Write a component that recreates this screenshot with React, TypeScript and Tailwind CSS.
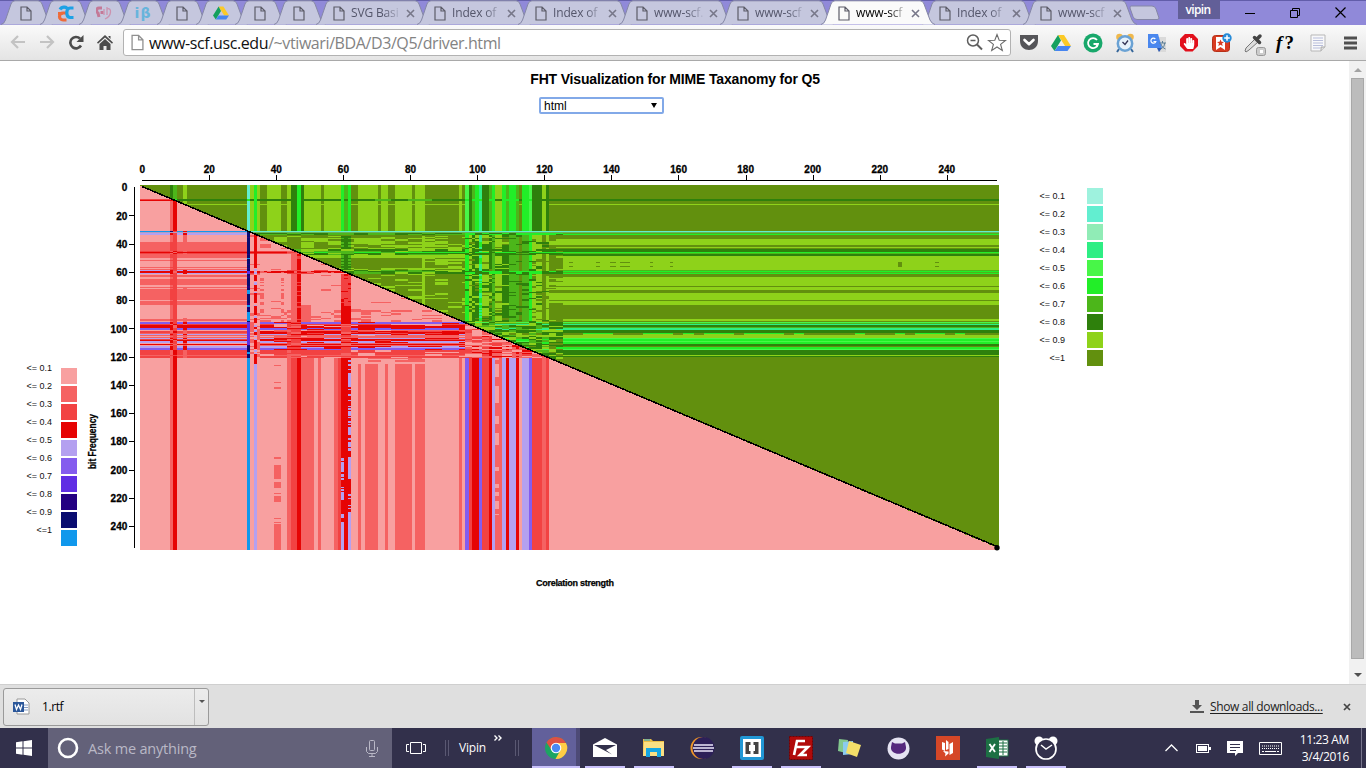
import React from 'react';
import { FaHandPaper } from 'react-icons/fa';

const UI = "font-['Open_Sans','Noto_Sans',sans-serif]";
const ARIAL = "'Liberation Sans', Arial, sans-serif";

/* ---------- heat map data ---------- */

const PINK = ['#f8a0a0', '#f56262', '#f24242', '#e60404', '#b4a0f0', '#845cee', '#602ee4', '#240082', '#0a0c70', '#1098ec', '#b49cc0'];
const GREEN = ['#9ef2de', '#62eed0', '#90ecb6', '#2eee84', '#48f648', '#22ee28', '#4cb61a', '#2e800c', '#8ed21a', '#62900e', '#68b45c'];

type Stops = [number, number][];

const bottomPink: Stops = [
  [139, 1], [170, 2], [173.4, 4], [177, 1], [247, 10], [250.5, 1], [254, 5], [257.3, 1], [287, 2], [291, 3], [297, 4],
  [300.8, 2], [314, 1], [317.4, 2], [321, 1], [334, 2], [338, 3], [341, 4], [351.4, 1], [357.3, 2], [361, 1], [364.6, 2],
  [378, 1], [385, 2], [388.3, 1], [394.7, 2], [411.7, 1], [415, 2], [425, 1], [458.4, 2], [461.8, 1], [465, 6], [468.5, 3],
  [471.7, 4], [478.5, 6], [482, 3], [488.5, 4], [492, 5], [495.3, 2], [502, 5], [505.5, 4], [508.7, 5], [515.4, 4],
  [518.7, 1], [522, 5], [528.7, 6], [532, 3], [542, 2], [545.5, 3], [549, 1],
];
const topGreen: Stops = [
  [139, 10], [170, 8], [173.4, 7], [177, 10], [183.4, 9], [187, 10], [247, 2], [250.5, 9], [254, 6], [257.3, 9], [260.7, 10],
  [267.3, 9], [280.8, 10], [287.4, 9], [290.8, 8], [297.4, 6], [301, 8], [304.3, 9], [321, 10], [324.4, 9], [341, 6],
  [344.4, 7], [347.8, 6], [351.3, 10], [357.4, 9], [377.8, 10], [381, 9], [387.8, 10], [394.4, 9], [411.7, 10], [415, 9],
  [425, 10], [458.4, 9], [461.8, 10], [465, 5], [468.4, 8], [471.7, 7], [475, 6], [478.4, 4], [481.8, 8], [488.7, 7],
  [492, 6], [495.4, 9], [502, 6], [505.4, 7], [508.7, 6], [515.4, 7], [518.8, 10], [522, 6], [528.8, 5], [532.3, 8],
  [542.3, 9], [545.4, 8], [549, 10],
];
const midGreen: Stops = [
  [465, 6], [468.4, 9], [471.7, 8], [478.4, 4], [481.8, 9], [488.7, 8], [492, 7], [495.4, 9], [502, 8], [508.7, 7],
  [518.8, 10], [522, 7], [528.8, 6], [532.3, 9], [542.3, 10], [545.4, 9], [549, 10],
];
const leftPink: Stops = [
  [185, 1], [199, 3], [200, 4], [201, 1], [231, 10], [232, 11], [233, 5], [235, 1], [242, 2], [247, 2], [251, 3], [252, 4],
  [253, 3], [254, 2], [258, 1], [260, 2], [261, 1], [267, 2], [268, 1], [269, 2], [270, 5], [271, 4], [273, 5], [274, 1],
  [275, 2], [277, 1], [279, 2], [285, 1], [287, 2], [288, 1], [289, 2], [300, 1], [301, 2], [305, 1], [319, 2], [321, 1],
  [322, 6], [324, 3], [325, 4], [328, 6], [330, 1], [331, 3], [333, 2], [334, 5], [335, 2], [336, 1], [337, 2], [338, 5],
  [339, 3], [340, 4], [341, 5], [343, 1], [344, 4], [345, 1], [346, 5], [348, 6], [350, 3], [355, 2], [356, 3], [358, 1],
];
const rightGreen: Stops = [
  [185, 10], [199, 8], [201, 10], [204, 9], [205, 10], [231, 2], [232, 11], [233, 7], [234, 6], [235, 10], [239, 9],
  [245, 10], [247, 9], [248, 10], [249, 8], [252, 6], [253, 7], [254, 8], [256, 9], [270, 7], [271, 6], [272, 7], [273, 6],
  [274, 10], [277, 9], [286, 10], [287, 9], [290, 10], [293, 9], [300, 10], [301, 9], [305, 10], [319, 9], [321, 10],
  [322, 5], [323, 7], [324, 4], [325, 8], [327, 7], [328, 4], [330, 8], [333, 10], [335, 9], [338, 5], [339, 6], [341, 5],
  [342, 6], [344, 8], [346, 10], [347, 6], [349, 5], [350, 8], [355, 9], [356, 8], [357, 10],
];

const at = (s: Stops, v: number) => {
  let r = s[0][1];
  for (const [p, c] of s) {
    if (v < p) break;
    r = c;
  }
  return r;
};
const noise = (a: number, b: number) => {
  const n = Math.sin(a * 127.1 + b * 311.7) * 43758.5453;
  return n - Math.floor(n);
};
const within = (v: number, ...r: [number, number][]) => r.some(([a, b]) => v >= a && v < b);

function pinkAt(x: number, y: number, c: number): number {
  const j = Math.floor((y - 185) / 1.42);
  if (y >= 358) {
    if (x > 351 && x < 425 && y < 364) return noise(Math.floor(c / 4), j) > 0.6 || y > 361 ? 1 : 2;
    if (within(x, [254, 257.3]) && y < 364) return 4;
    if (within(x, [274, 281]))
      return within(y, [365, 366], [382, 383], [387, 389], [457, 459], [465, 479], [482, 488], [493, 494], [496, 502], [518, 519], [522, 523], [524, 550]) ? 2 : 1;
    if (within(x, [341, 344.5])) return y > 456 && (y > 524 || noise(3, j) > 0.35) && !within(y, [480, 485], [500, 514]) ? 5 : 4;
    if (within(x, [348, 351.4])) return y > 511 || within(y, [373, 384], [427, 434], [442, 445], [457, 479]) || noise(9, j) > 0.72 ? 5 : 4;
    if (within(x, [495.3, 498.8])) return y < 515 && noise(7, Math.floor(j / 3)) > 0.5 ? 1 : 2;
    return at(bottomPink, x);
  }
  const row = at(leftPink, y);
  if (x < 247) {
    if (row === 11) return 11;
    if (within(x, [170, 173.4])) return row >= 5 ? (row === 10 ? 9 : 4) : row > 3 ? row : y > 198 ? (row === 2 ? 3 : 2) : 1;
    if (within(x, [173.4, 177])) return row >= 5 ? 3 : row === 3 ? 4 : row === 4 ? 2 : y < 231 ? 4 : 3;
    if (within(x, [183.5, 187])) return row >= 4 ? 4 : within(y, [235, 258], [288, 290], [318, 358]) ? 2 : row;
    return row;
  }
  if (x < 250.5) return within(y, [271, 274], [322, 345]) ? 7 : within(y, [258, 259], [290, 294], [305, 307], [312, 321], [352, 354]) ? 10 : noise(2, j) > 0.85 ? 8 : 9;
  if (within(x, [254, 257.3])) return noise(c, j) > 0.84 ? 5 : noise(c, j + 1) > 0.8 ? 1 : 4;
  if (y >= 322) {
    const n = noise(Math.floor(c / 5), j);
    if (x > 465) {
      const m = noise(Math.floor(c / 3), j);
      if (at(bottomPink, x) === 4 && m > 0.5) return y > 345 ? 4 : 3;
      return m > 0.9 ? 4 : m > 0.68 ? 3 : m > 0.28 ? 2 : 1;
    }
    if (within(x, [287, 301], [341, 351])) return n > 0.5 ? 3 : row > 4 ? 4 : 2;
    if (x < 260) return n > 0.5 ? 2 : 1;
    if (row === 6) return n > 0.2 ? 6 : 4;
    if (row === 5) return n > 0.4 ? 5 : 4;
    if (within(y, [331, 334], [338, 341])) return n > 0.3 ? 4 : 3;
    return n > 0.88 ? 1 : row === 1 ? 2 : row;
  }
  if (within(y, [251, 254])) return y === 252 ? (x < 288 ? 4 : 3) : x < 288 ? 3 : 2;
  if (within(y, [270, 274])) return within(y, [271, 273]) ? (noise(c, j) > 0.2 ? 4 : 2) : noise(Math.floor(c / 4), j) > 0.5 ? 3 : 1;
  if (within(x, [291, 297])) return 2;
  if (within(x, [297, 301])) return noise(c, j) > 0.7 ? 3 : 4;
  if (within(x, [341, 351.4])) return y > 305 || noise(c, j) > 0.75 ? 4 : 3;
  if (within(x, [301, 311]) && y > 304) return 2;
  if (within(x, [287, 291], [334, 341]) && y > 308) return noise(1, j) > 0.4 ? 2 : 1;
  if (within(x, [260.5, 264], [281, 284.5]) && y > 274) return noise(5, j) > 0.5 ? 2 : 1;
  if (y < 251 || y > 309) return noise(Math.floor(c / 3), j) > 0.68 ? 2 : 1;
  return noise(Math.floor(c / 3), j) > 0.93 ? 2 : 1;
}

function greenAt(x: number, y: number, c: number): number {
  const j = Math.floor((y - 185) / 1.42);
  if (y < 231) {
    const col = at(topGreen, x);
    if (within(y, [199, 201])) return x > 430 || x < 300 ? (col < 8 ? 6 : 8) : col === 6 ? 6 : noise(Math.floor(c / 5), 1) > 0.2 ? 8 : 7;
    if (y === 204) return col < 9 ? col : 9;
    return col;
  }
  if (y === 231) return 2;
  if (y === 232) return 11;
  const row = at(rightGreen, y);
  if (x >= 562) {
    if (within(y, [262, 263], [266, 267]) && within(x, [569, 573], [597, 601], [609, 616], [620, 629], [650, 654], [671, 674], [897, 901], [934, 938])) return 10;
    if (within(y, [263, 266]) && within(x, [571, 573], [897, 901])) return 10;
    if (y === 333 && noise(Math.floor(c / 3), 3) > 0.5) return 6;
    if (y === 334 && noise(Math.floor(c / 3), 3) > 0.5) return 9;
    return row;
  }
  if (x < 465) {
    const n = noise(Math.floor(c / 4), j);
    if (within(x, [254, 257.3])) return n > 0.4 ? 6 : 8;
    if (y < 236) return y < 235 ? (n > 0.4 ? 7 : 8) : 10;
    if (y === 252) return n > 0.35 ? 6 : 7;
    if (within(y, [249, 255])) return n > 0.45 ? 8 : n > 0.25 ? 7 : 9;
    if (within(y, [270, 274])) return n > 0.75 ? 7 : n > 0.2 ? 8 : 9;
    if (within(x, [341, 351.4])) return within(x, [344, 348]) ? 8 : n > 0.5 ? 7 : 8;
    if (within(x, [421, 425])) return 9;
    if (y < 249) return n > 0.55 ? 9 : 10;
    if (y < 258) return 9;
    if (within(x, [301, 311])) return 9;
    if (y < 268) return x > 425 && n > 0.65 ? 9 : 10;
    if (y < 270) return n > 0.4 ? 9 : 10;
    return n > 0.8 ? 9 : 10;
  }
  const n = noise(Math.floor(c / 2), j);
  if (y >= 321) return n > 0.75 ? row : n > 0.5 ? 8 : n > 0.25 ? 9 : x > 549 ? 10 : 7;
  if (within(y, [233, 235], [252, 253], [271, 274])) return n > 0.4 ? 6 : 8;
  if (within(y, [249, 255])) return n > 0.4 ? 8 : at(midGreen, x);
  if (x >= 549) return row === 9 && !within(y, [258, 268]) ? (n > 0.3 ? 9 : 10) : 10;
  const col = at(midGreen, x);
  if (col === 4) return n > 0.5 ? 4 : 6;
  if (n > 0.84) return col === 8 ? 9 : 8;
  if (n < 0.1 && col > 7) return 10;
  return col;
}

const edge = (c: number) => Math.round(139.6 + c * 3.357);

function buildPaths() {
  const out: Record<string, string> = {};
  const add = (k: string, x: number, y: number, w: number) => {
    out[k] = (out[k] || '') + `M${x} ${y}h${w}v1h${-w}z`;
  };
  for (let y = 185; y < 550; y++) {
    const diag = (142 + (y - 186.5) * 2.3684 - 139.6) / 3.357;
    let start = 0;
    let prev = '';
    for (let c = 0; c <= 256; c++) {
      let k = '';
      if (c < 256) {
        const x = 139.6 + (c + 0.5) * 3.357;
        k = c < diag ? PINK[pinkAt(x, y, c) - 1] : GREEN[greenAt(x, y, c) - 1];
      }
      if (k !== prev) {
        if (prev) add(prev, edge(start), y, edge(c) - edge(start));
        start = c;
        prev = k;
      }
    }
  }
  return out;
}
const paths = buildPaths();
const ticks = Array.from({ length: 13 }, (_, i) => i * 20);

function Legend({ x, y, colors, textX, textY }: { x: number; y: number; colors: string[]; textX: number; textY: number }) {
  return (
    <g>
      {colors.slice(0, 10).map((c, i) => (
        <g key={c}>
          <rect x={x} y={y + i * 18} width={16} height={16} fill={c} />
          <text x={textX} y={textY + i * 18} textAnchor="end" fontSize={9} fill="#111">
            {i === 9 ? '<=1' : `<= 0.${i + 1}`}
          </text>
        </g>
      ))}
    </g>
  );
}

function Chart() {
  return (
    <svg className="block shrink-0" width="1349" height="564" viewBox="0 120 1349 564" fontFamily={ARIAL}>
      <g shapeRendering="crispEdges">
        {Object.entries(paths).map(([k, d]) => (
          <path key={k} d={d} fill={k} />
        ))}
      </g>
      <path d="M142 186.5L997 546.5" stroke="#000" strokeWidth="1.5" shapeRendering="crispEdges" />
      <circle cx="997" cy="547.8" r="2.7" />
      <path d="M142 180.5H997M134.5 187V548" stroke="#000" shapeRendering="crispEdges" />
      {ticks.map((t) => (
        <g key={t} fontSize={10} fontWeight="bold" stroke="#000" strokeWidth={0.3}>
          {t > 0 && (
            <path d={`M${Math.round(142 + t * 3.353) + 0.5} 175v5M129 ${Math.round(187.2 + t * 1.412) + 0.5}h5`} strokeWidth={1} shapeRendering="crispEdges" />
          )}
          <text x={142.3 + t * 3.352} y={173} textAnchor="middle">{t}</text>
          <text x={127.3} y={191.3 + t * 1.412} textAnchor="end">{t}</text>
        </g>
      ))}
      <g fontSize={9} fontWeight="bold" stroke="#000" strokeWidth={0.25}>
        <text x={536} y={586} textLength={78}>Corelation strength</text>
        <text transform="translate(96 469) rotate(-90)" fontSize={10} textLength={55} lengthAdjust="spacingAndGlyphs">bit Frequency</text>
      </g>
      <Legend x={61} y={368} colors={PINK} textX={52} textY={371} />
      <Legend x={1087} y={188} colors={GREEN} textX={1065} textY={199} />
    </svg>
  );
}

/* ---------- browser chrome ---------- */

const FileIcon = ({ big = false }: { big?: boolean }) => (
  <svg className="shrink-0" width={big ? 13 : 12} height={big ? 17 : 15} viewBox="0 0 12 15" fill="none" stroke={big ? '#909090' : '#5c5c68'} strokeWidth="1.2">
    <path d="M1 1h6l4 4v9H1zM7 1v4h4" fill={big ? '#fff' : 'none'} />
  </svg>
);
const Drive = ({ s }: { s: number }) => (
  <svg width={s} height={s} viewBox="0 0 20 20">
    <path d="M7 2h6l7 11h-6z" fill="#fbc926" />
    <path d="M7 2l3 5.500L3.500 18 0 13z" fill="#14a05e" />
    <path d="M7 13h13l-3.500 5h-13z" fill="#4685f0" />
  </svg>
);

const Close = () => (
  <svg className="block" width="9" height="9" viewBox="0 0 9 9" stroke="#777789" strokeWidth="1.6"><path d="M1 1l7 7M8 1L1 8" /></svg>
);

function Tab({ title, icon, active }: { title?: string; icon?: React.ReactNode; active?: boolean }) {
  const w = title ? 114 : 52;
  const d = `M0 24.500Q3 24 4.500 20L10 4Q11 .8 14 .8H${w - 15}Q${w - 12} .8 ${w - 11} 4L${w - 5} 20Q${w - 3} 24 ${w} 24.500`;
  return (
    <div className={`relative h-[25px] shrink-0 -mr-[13px] ${title ? 'w-[114px]' : 'w-[52px]'} ${active ? 'z-10' : ''}`}>
      <svg className="absolute inset-0" width={w} height="25" fill={active ? '#fafafa' : '#c5c7de'} stroke="#8587a6"><path d={d} /></svg>
      <div className={`relative flex h-full items-center ${title ? 'pl-[17px] pr-[15px] pt-px' : 'justify-center pr-[2px] pt-px'}`}>
        {icon || <FileIcon />}
        {title && (
          <>
            <span className={`${UI} ml-[6px] w-[53px] shrink-0 whitespace-nowrap text-[12px] leading-4 tracking-[-0.15px] ${active ? 'text-black' : 'text-[#54566b]'} [mask-image:linear-gradient(to_right,black_62%,transparent_96%)]`}>
              {title}
            </span>
            <span className="ml-auto"><Close /></span>
          </>
        )}
      </div>
    </div>
  );
}

const extIcons: React.ReactNode[] = [
  <svg width="20" height="17" viewBox="0 0 20 17"><path d="M1 1h18v6c0 12-18 12-18 0z" fill="#555559" /><path d="M5.500 6L10 10.200 14.500 6" stroke="#fff" strokeWidth="2.600" fill="none" strokeLinecap="round" strokeLinejoin="round" /></svg>,
  <Drive s={20} />,
  <svg width="20" height="20" viewBox="0 0 20 20"><circle cx="10" cy="10" r="9.500" fill="#18a86b" /><path d="M14 7A5 5 0 1 0 15 11h-4.500M15 11l-2 3" stroke="#fff" strokeWidth="1.800" fill="none" /></svg>,
  <svg width="20" height="20" viewBox="0 0 20 20"><circle cx="4.500" cy="4" r="3.300" fill="#efb84c" /><circle cx="15.500" cy="4" r="3.300" fill="#efb84c" /><path d="M4 16l-2 3M16 16l2 3" stroke="#37679a" strokeWidth="2" /><circle cx="10" cy="10.500" r="7.200" fill="#e7f1fa" stroke="#6aa2d4" strokeWidth="2.500" /><path d="M7.500 9l2.500 2.500 3-4" stroke="#335" fill="none" strokeWidth="1.300" /></svg>,
  <svg width="20" height="20" viewBox="0 0 20 20"><path d="M8 4h11v15h-8z" fill="#dadada" /><path d="M1 1h10l4 14H1z" fill="#4a87ee" /><path d="M10 15h5l-3 4z" fill="#2b59b5" /><path d="M8.300 6A2.500 2.500 0 1 0 8.800 8.500H6.500" stroke="#fff" fill="none" strokeWidth="1.200" /><path d="M12 10h7M15.500 8v2M13.500 16c3-1 4-3 4-6M14 11c.5 2 2 4 4.500 5" stroke="#5b7e96" fill="none" /></svg>,
  <span className="flex h-[18px] w-[18px] items-center justify-center bg-[#e2101c] [clip-path:polygon(30%_0,70%_0,100%_30%,100%_70%,70%_100%,30%_100%,0_70%,0_30%)]"><FaHandPaper color="#fff" size={12} /></span>,
  <svg width="21" height="20" viewBox="0 0 21 20"><rect x="1.500" y="2.500" width="17" height="16" rx="3" fill="#d93c22" stroke="#b63018" /><path d="M5 4h9v13l-4.500-3L5 17z" fill="#fff" /><path d="M9.500 6.500l1 2.300 2.500.2-2 1.600.7 2.400-2.200-1.300L7.300 13 8 10.600 6 9l2.500-.2z" fill="#d93c22" /><circle cx="16" cy="5" r="4.700" fill="#268bd8" /><path d="M16 2.200v5.600M13.200 5h5.600" stroke="#fff" strokeWidth="1.500" /></svg>,
  <svg className="ml-[4px] mt-[4px]" width="24" height="24" viewBox="0 0 24 24"><path d="M2 18l1-3 9-9 3 3-9 8-3 2z" fill="#ddd" stroke="#777" /><path d="M11.500 4.500l5 5M14 6l3-3" stroke="#444" strokeWidth="3.500" strokeLinecap="round" /><rect x="13.500" y="14.500" width="9" height="8" rx="2" fill="#ccc" stroke="#999" /><rect x="17" y="17" width="3" height="3" fill="#fff" /></svg>,
  <span className="font-['Liberation_Serif',serif] text-[19px] font-bold italic leading-5 text-black">f<span className="ml-[2px] not-italic">?</span></span>,
  <svg className="ml-[2px]" width="16" height="18" viewBox="0 0 16 18"><path d="M1 1h14v12l-4 4H1z" fill="#f8f8fa" stroke="#b7b7b7" /><path d="M3 4h10M3 6.500h10M3 9h10M3 11.500h10M3 14h7" stroke="#b8bedb" /><path d="M15 13h-4v4" fill="#ddd" stroke="#aaa" /></svg>,
  <svg className="ml-[3px]" width="14" height="14"><path d="M0 2h13M0 7h13M0 12h13" stroke="#505050" strokeWidth="3" /></svg>,
];

/* ---------- taskbar ---------- */

const apps: { icon: React.ReactNode; open?: boolean }[] = [
  { icon: <svg width="24" height="24" viewBox="0 0 24 24"><circle cx="12" cy="12" r="11" fill="#1da462" /><path d="M12 7h10a11 11 0 0 1-10.500 16L16.500 14z" fill="#ffcd46" /><path d="M12 1A11 11 0 0 1 22 7H12L7.500 14 2.500 6.500A11 11 0 0 1 12 1z" fill="#dd5144" /><circle cx="12" cy="12" r="5.300" fill="#fff" /><circle cx="12" cy="12" r="4.200" fill="#4a8af4" /></svg> },
  { icon: <svg width="24" height="20" viewBox="0 0 24 20"><path d="M0 6.500L12 0l12 6.500V19H0z" fill="#fff" /><path d="M1 7h22l-10 5 6 4.500z" fill="#32304b" /></svg>, open: true },
  { icon: <svg width="23" height="20" viewBox="0 0 23 20"><path d="M1 1h8l2 2h11v15H1z" fill="#edbd45" /><path d="M2 4h20v14H1z" fill="#fbdf83" /><path d="M4 10h15v9h-4v-5H8v5H4z" fill="#16a6e3" /><path d="M2 2h6" stroke="#16a6e3" /></svg>, open: true },
  { icon: <svg width="25" height="24" viewBox="0 0 25 24"><circle cx="11.500" cy="12" r="11" fill="#ef9528" /><circle cx="13.500" cy="12" r="11" fill="#2d2058" /><path d="M4 9h19M3 12h21M4 15h19" stroke="#ebe6fa" strokeWidth="1.700" /></svg> },
  { icon: <svg width="24" height="24" viewBox="0 0 24 24"><rect width="24" height="24" rx="2" fill="#2197d5" /><rect x="3" y="3" width="18" height="18" fill="#fff" /><path d="M10.500 6H5.500v12h5v-3H9V9h1.500zM13.500 6h5v12h-5v-3H15V9h-1.500z" fill="#444" /></svg>, open: true },
  { icon: <svg width="24" height="24" viewBox="0 0 24 24"><rect x=".5" y=".5" width="23" height="23" fill="#b10a0a" stroke="#700" strokeDasharray="2 1" /><path d="M5 19L8 5h8M7 11h6M12 11h7l-8 8h7" stroke="#fff" strokeWidth="2.600" fill="none" /></svg>, open: true },
  { icon: <svg width="25" height="22" viewBox="0 0 25 22"><path d="M2 2l9 1-2 13-8-2z" fill="#83c88e" /><path d="M6 5l10-1v13l-10 1z" fill="#8bcbef" /><path d="M12 4l12 4-4 12-11-4z" fill="#f4df69" /></svg> },
  { icon: <svg width="23" height="23" viewBox="0 0 23 23"><circle cx="11.500" cy="11.500" r="11" fill="#e5e3f2" /><path d="M5 5l3 1.500h7L18 5l1 5c1 9-16 9-15 0z" fill="#55287d" /></svg> },
  { icon: <svg width="24" height="24" viewBox="0 0 24 24"><rect width="24" height="24" fill="#d54727" /><path d="M6 6l3 1v8l-3-1.500zM13.500 8l3.500-2v11l-3.500 2zM10 4l2.500 2v7L10 14z" fill="#fff" /><path d="M7 15l5.500.500v2L9 20.500l.500-3z" fill="#fff" /></svg> },
  { icon: <svg width="24" height="24" viewBox="0 0 24 24"><rect x="13" y="4" width="10" height="16" fill="#fff" stroke="#1d7044" /><path d="M14 7h8M14 10h8M14 13h8M14 16h8M18 5v14" stroke="#1d7044" /><path d="M1 3l13-2v22L1 21z" fill="#1d7044" /><path d="M4.500 8l5.500 8M10 8l-5.500 8" stroke="#fff" strokeWidth="1.900" /></svg>, open: true },
  { icon: <svg width="24" height="24" viewBox="0 0 24 24"><circle cx="5" cy="5" r="4.500" fill="#fff" /><circle cx="19" cy="5" r="4.500" fill="#fff" /><circle cx="12" cy="13" r="10" fill="#32304b" stroke="#fff" strokeWidth="1.700" /><path d="M7 9l5 4 6-4" stroke="#fff" fill="none" strokeWidth="1.500" /></svg>, open: true },
];

export default function App() {
  return (
    <div className="flex h-[768px] w-[1366px] flex-col overflow-hidden bg-white">
      <header className="flex h-[25px] shrink-0 border-t border-[#625daa] bg-[#9089d9]">
        <div className="-mt-px flex pl-[1px]">
          <Tab />
          <Tab icon={<svg width="17" height="17" viewBox="0 0 17 17" fill="none" strokeWidth="3.200"><path d="M9.500 8H6A3.500 3.500 0 0 0 6 15h3.500M1 8.500h5" stroke="#ed6b3b" /><path d="M3 4.500C5 1 10 1.500 11 5M16.500 3H13c-4 0-4.500 9 0 9.500h3.500" stroke="#1da1e5" /></svg>} />
          <Tab icon={<svg width="16" height="14" viewBox="0 0 16 14" fill="none" stroke="#cc92ae" strokeWidth="2"><path d="M6 2H3C0 2 0 6 2 7l1 4M6 5v3" stroke="#c47997" strokeWidth="3" /><path d="M8 3v6M11 1v8M11 3c5-2 5 7-2 10" strokeWidth="1.300" /></svg>} />
          <Tab icon={<span className="font-['DejaVu_Sans',sans-serif] text-[14px] font-bold leading-4 tracking-[1px] text-[#67b4dc]">iβ</span>} />
          <Tab />
          <Tab icon={<Drive s={16} />} />
          <Tab />
          <Tab />
          <div className="w-[3px]" />
          <Tab title="SVG Basi" />
          <Tab title="Index of" />
          <Tab title="Index of" />
          <Tab title="www-scf." />
          <Tab title="www-scf" />
          <Tab title="www-scf" active />
          <Tab title="Index of" />
          <Tab title="www-scf" />
          <svg className="ml-[4px] mt-[5px]" width="34" height="16"><path d="M3 1h21q3 0 4 3l3 9q0 1.500-2 1.500H9q-3 0-4-3L2 3q0-2 1-2z" fill="#c5c7de" stroke="#8587a6" /></svg>
        </div>
        <div className="-mt-px ml-auto flex text-black">
          <div className={`${UI} flex h-[19px] w-[42px] items-center justify-center bg-[#625f98] pr-[2px] text-[12px] font-semibold tracking-[-0.6px] text-white`}>vipin</div>
          <div className="flex w-[60px] items-center justify-center"><svg width="10" height="10" stroke="#000"><path d="M0 5.500h10" /></svg></div>
          <div className="flex w-[30px] items-center justify-center"><svg width="10" height="10" fill="none" stroke="#000"><path d="M.5 2.500h7v7h-7zM2.500 2V.5h7v7H8" /></svg></div>
          <div className="flex w-[56px] items-center justify-center pl-1"><svg width="11" height="11" stroke="#000" strokeWidth="1.200"><path d="M.5.5l10 10M10.500.5l-10 10" /></svg></div>
        </div>
      </header>

      <div className="flex h-[36px] shrink-0 items-center border-b border-[#a9a9a9] bg-gradient-to-b from-[#fafafa] to-[#e4e4e4]">
        <div className="flex w-[123px] pl-[3px]">
          <div className="flex w-[29px] justify-center"><svg width="16" height="14" viewBox="0 0 16 14" fill="none" stroke="#c3c3c3" strokeWidth="2.200"><path d="M15 7H2M8 1L2 7l6 6" /></svg></div>
          <div className="flex w-[29px] justify-center"><svg width="16" height="14" viewBox="0 0 16 14" fill="none" stroke="#c3c3c3" strokeWidth="2.200"><path d="M1 7h13M8 1l6 6-6 6" /></svg></div>
          <div className="flex w-[29px] justify-center"><svg width="16" height="15" viewBox="0 0 16 15"><path d="M13 10.500A5.700 5.700 0 1 1 12 3.500" fill="none" stroke="#4b4b4b" strokeWidth="2.600" /><path d="M15.500 0v7H8.500z" fill="#4b4b4b" /></svg></div>
          <div className="flex w-[29px] justify-center"><svg width="16" height="15" viewBox="0 0 16 15" fill="#4b4b4b"><path d="M8 0l8 7.500-1 1.200L8 2.400 1 8.700 0 7.500zM11.500 1h2v3l-2-2zM8 4l5.500 5v6h-4v-4h-3v4h-4V9z" /></svg></div>
        </div>
        <div className="flex h-[27px] w-[888px] items-center rounded-[3px] border border-[#b2b2b2] bg-white pl-[7px] pr-[3px]">
          <FileIcon big />
          <span className={`${UI} ml-[5px] whitespace-nowrap text-[16px] leading-6 tracking-[-0.4px] text-[#838383]`}><span className="text-[#111]">www-scf.usc.edu</span>/~vtiwari/BDA/D3/Q5/driver.html</span>
          <svg className="ml-auto" width="17" height="17" fill="none" stroke="#5e5e5e" strokeWidth="1.500"><circle cx="7" cy="6.500" r="5.500" /><path d="M4.500 6.500h5" /><path d="M11 10.500l5 5" strokeWidth="2" /></svg>
          <svg className="ml-[4px]" width="20" height="19" viewBox="0 0 20 19" fill="#fff" stroke="#6b6b6b" strokeWidth="1.100"><path d="M10 1.500l2.200 5.700 6.300.3-4.900 3.900 1.700 6L10 14l-5.300 3.400 1.700-6-4.900-3.900 6.300-.3z" /></svg>
        </div>
        <div className="ml-[2px] flex">
          {extIcons.map((ic, i) => (
            <div key={i} className="flex h-6 w-8 items-center justify-center">{ic}</div>
          ))}
        </div>
      </div>

      <div className="flex h-[623px] shrink-0">
        <main className="flex w-[1349px] flex-col items-center font-['Liberation_Sans',Arial,sans-serif]">
          <h1 className="mt-[9px] h-[18px] whitespace-nowrap pl-px text-[14px] font-bold leading-[18px] tracking-[-0.17px] text-black">FHT Visualization for MIME Taxanomy for Q5</h1>
          <div className="ml-[-146px] mt-[9px] flex h-[17px] w-[125px] items-center justify-between rounded-[2px] border-2 border-[#82a9e8] bg-white pl-[3px] pr-[5px] text-[12px] leading-3 text-black">
            <span>html</span>
            <svg width="6" height="5"><path d="M0 0h6L3 5z" /></svg>
          </div>
          <div className="h-[6px] shrink-0" />
          <Chart />
        </main>
        <div className="flex w-[17px] flex-col items-center bg-[#f1f1f1]">
          <svg className="shrink-0" width="17" height="17"><path d="M5 11h8L9 7z" fill="#a3a3a3" /></svg>
          <div className="h-[581px] w-[13px] shrink-0 border border-[#a8a8a8] bg-[#bcbcbc]" />
          <svg className="mt-[8px] shrink-0" width="17" height="17"><path d="M5 6h8l-4 4z" fill="#505050" /></svg>
        </div>
      </div>

      <div className={`${UI} flex h-[44px] shrink-0 items-center border-t border-[#cfcfcf] bg-[#dfdfdf] text-[12px] text-black`}>
        <div className="ml-[3px] flex h-[38px] w-[206px] rounded-[3px] border border-[#9a9a9a] bg-gradient-to-b from-[#ececec] to-[#e2e2e2]">
          <div className="flex flex-1 items-center pl-[9px]">
            <svg width="17" height="17" viewBox="0 0 17 17"><path d="M4 1h8l4 4v11H4z" fill="#fff" stroke="#999" /><path d="M10 7h5M10 9.500h5M10 12h5" stroke="#8aa0c4" /><rect y="4" width="11" height="10" fill="#2b579a" /><path d="M2 6.500l1.500 5L5.500 7l2 4.500L9 6.500" fill="none" stroke="#fff" strokeWidth="1.300" /></svg>
            <span className="ml-[12px] tracking-[-0.4px]">1.rtf</span>
          </div>
          <div className="flex w-[14px] justify-center border-l border-[#bdbdbd] pt-[11px]"><svg width="6" height="4"><path d="M0 0h6L3 3z" fill="#555" /></svg></div>
        </div>
        <div className="ml-auto flex items-center pr-[15px]">
          <svg width="14" height="14" fill="#555"><path d="M5 0h4v5h3L7 10 2 5h3zM0 11h14v2H0z" /></svg>
          <span className="ml-[6px] w-[114px] whitespace-nowrap tracking-[-0.35px] text-[#222] underline underline-offset-2">Show all downloads...</span>
          <svg className="ml-[19px]" width="8" height="8" stroke="#444" strokeWidth="1.700"><path d="M1 1l6 6M7 1L1 7" /></svg>
        </div>
      </div>

      <footer className={`${UI} flex h-[40px] shrink-0 bg-[#32304b] text-white`}>
        <div className="flex w-[48px] items-center justify-center"><svg width="16" height="16" fill="#fff"><path d="M0 2.300L6.500 1.300v6.200H0zM7.500 1.200L16 0v7.500H7.500zM0 8.500h6.500v6.200L0 13.700zM7.500 8.500H16V16l-8.500-1.200z" /></svg></div>
        <div className="flex w-[344px] items-center bg-[#636179] pl-[9px] pr-[14px]">
          <svg width="22" height="22" fill="none" stroke="#fff" strokeWidth="2.600"><circle cx="11" cy="11" r="9" /></svg>
          <span className="ml-[9px] mt-px text-[14.5px] tracking-[-0.2px] text-[#b9b8c6]">Ask me anything</span>
          <svg className="ml-auto" width="12" height="18" fill="none" stroke="#b9b8c6"><rect x="3.500" y="1.500" width="5" height="10" rx="1" /><path d="M.5 8v4.500l2 2h7l2-2V8M6 15v2.500M3 17.500h6" /></svg>
        </div>
        <div className="flex w-[48px] items-center justify-center"><svg width="20" height="12" fill="none" stroke="#fff"><path d="M4.500.5h11v11h-11zM3 2.500H.5v7H3M17 2.500h2.500v7H17" /></svg></div>
        <div className="flex w-[92px] items-center">
          <svg className="ml-[4px]" width="5" height="16" stroke="#5a5872"><path d="M1.500 0v16M4.500 0v16" /></svg>
          <span className="ml-[10px] w-[28px] text-[12px] tracking-[-0.2px]">Vipin</span>
          <svg className="mb-[20px] ml-[7px]" width="8" height="6" fill="none" stroke="#fff" strokeWidth="1.400"><path d="M.5.5L3 3 .5 5.500M4.500.5L7 3 4.500 5.500" /></svg>
          <svg className="ml-[12px]" width="5" height="16" stroke="#5a5872"><path d="M1.500 0v16M4.500 0v16" /></svg>
        </div>
        <div className="flex">
          {apps.map((a, i) => (
            <div key={i} className={`flex flex-col ${i === 0 ? 'w-[48px] border-r-4 border-[#4d4a76] bg-[#62609b]' : 'w-[49px]'}`}>
              <div className={`flex h-[38px] items-center justify-center pt-[2px] ${i === 0 ? 'pl-[4px]' : ''}`}>{a.icon}</div>
              <div className={`h-[2px] ${i === 0 ? '-mr-1 bg-[#c8c0fa]' : a.open ? 'ml-[5px] w-[40px] bg-[#c8c0fa]' : ''}`} />
            </div>
          ))}
        </div>
        <div className="ml-auto flex items-center">
          <div className="flex w-[32px] justify-center"><svg width="13" height="8" fill="none" stroke="#fff" strokeWidth="1.300"><path d="M.5 7l6-6 6 6" /></svg></div>
          <div className="flex w-[32px] justify-center"><svg width="15" height="9"><rect x=".5" y=".5" width="12" height="8" fill="none" stroke="#fff" /><path d="M2 2h9v5H2zM13 3h2v3h-2z" fill="#fff" /></svg></div>
          <div className="flex w-[32px] justify-center"><svg width="16" height="17"><path d="M0 1h16v12h-5l-3 3v-3H0z" fill="#fff" /><path d="M3 4.500h10M3 7.500h10M3 10.500h6" stroke="#32304b" /></svg></div>
          <div className="flex w-[38px] justify-center"><svg width="23" height="13" fill="none" stroke="#fff"><path d="M.5.5h22v12H.5z" /><path d="M3 4h17M3 6.500h17" strokeDasharray="1 1" /><path d="M3 9.500h2M6 9.500h11M18 9.500h2" /></svg></div>
          <div className="w-[60px] whitespace-nowrap text-right text-[12px] leading-[17px] tracking-[-0.35px]"><div>11:23 AM</div><div>3/4/2016</div></div>
          <div className="ml-[12px] h-[40px] w-[5px] border-l border-[#77758c]" />
        </div>
      </footer>
    </div>
  );
}
